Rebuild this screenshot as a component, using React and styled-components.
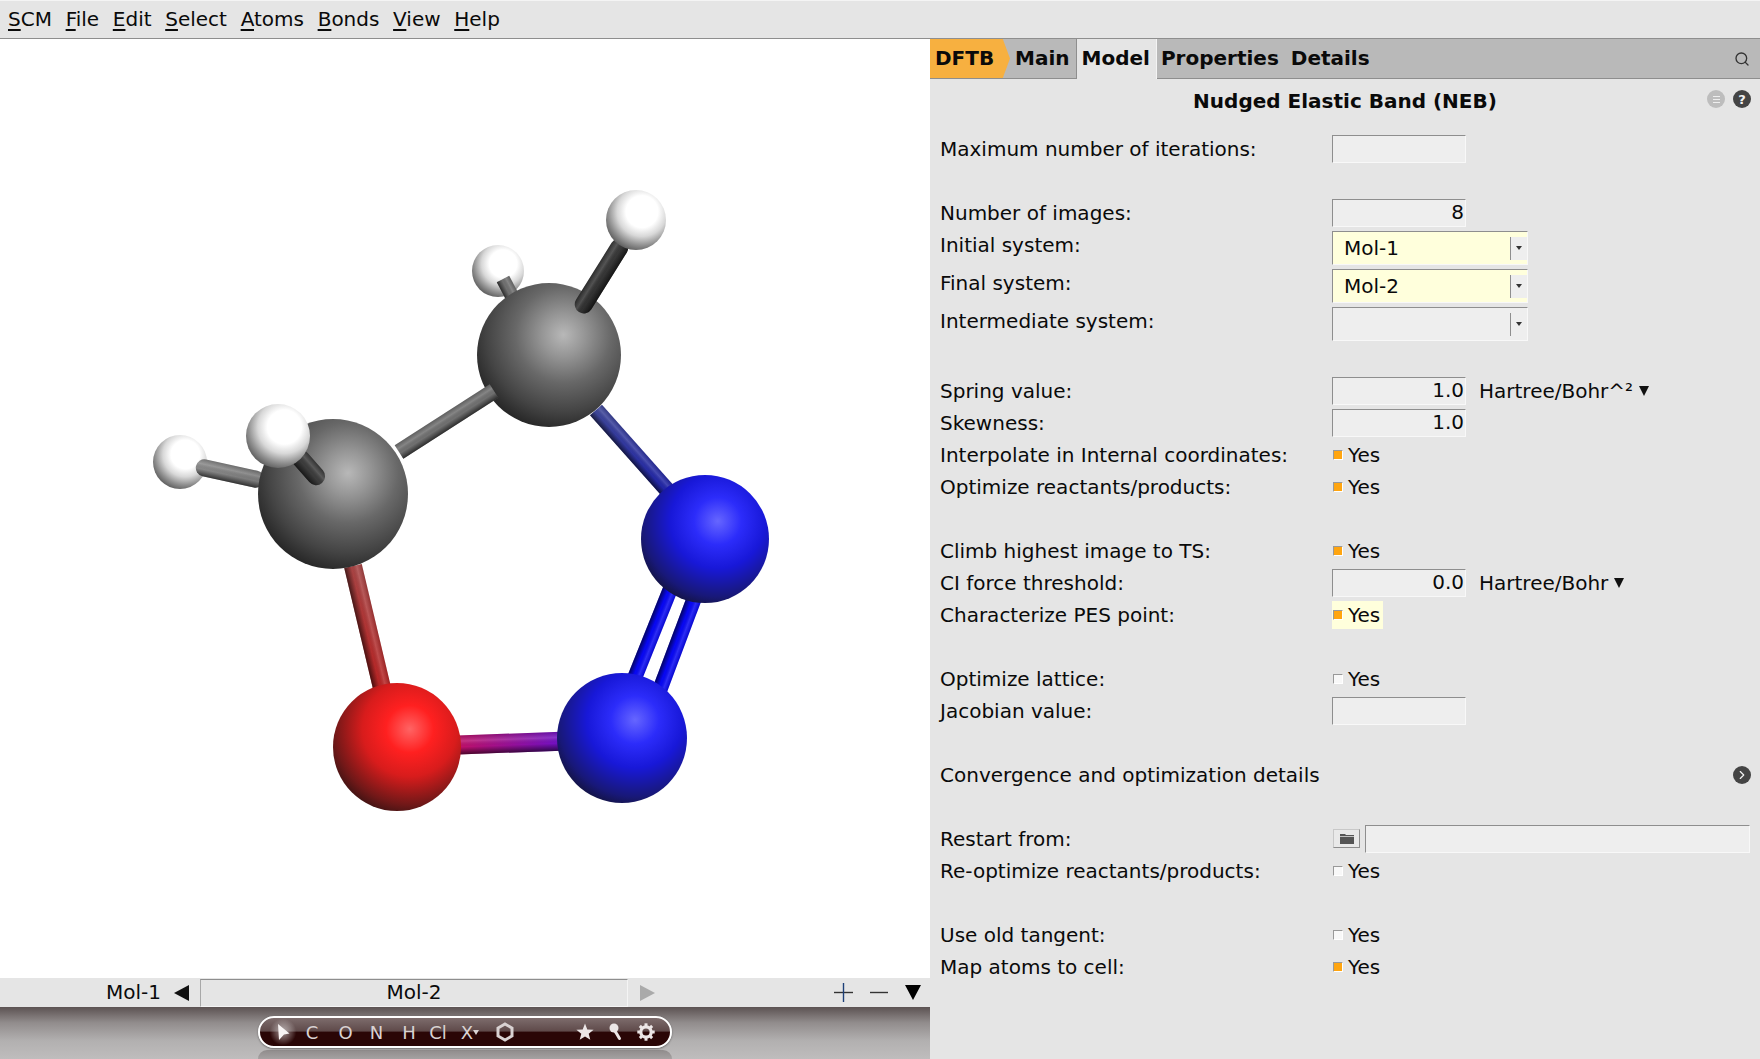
import React from "react";
import styled, { createGlobalStyle } from "styled-components";
import { Search, ChevronRight } from "lucide-react";

const GlobalStyle = createGlobalStyle`
  html, body {
    margin: 0;
    padding: 0;
    background: #e5e5e5;
    overflow: hidden;
  }
  * {
    box-sizing: border-box;
  }
`;

const Page = styled.div`
  width: 1760px;
  height: 1059px;
  display: flex;
  flex-direction: column;
  font-family: "DejaVu Sans", sans-serif;
  font-size: 20px;
  color: #0a0a0a;
  background: #e5e5e5;
`;

const MenuBar = styled.div`
  height: 39px;
  flex: none;
  display: flex;
  align-items: center;
  padding: 0 0 2px 8px;
  gap: 13.7px;
  background: #e5e5e5;
  border-top: 1px solid #f4f4f4;
  border-bottom: 1px solid #8e8e8e;
`;

const MenuItem = styled.span`
  line-height: 24px;
`;

const Mnemonic = styled.span`
  text-decoration: underline;
  text-underline-offset: 3px;
`;

const Body = styled.div`
  flex: 1;
  display: flex;
  min-height: 0;
`;

const LeftColumn = styled.div`
  width: 930px;
  flex: none;
  display: flex;
  flex-direction: column;
`;

const Viewer = styled.div`
  flex: 1;
  min-height: 0;
  background: #fff;
`;

const MoleculeSvg = styled.svg`
  display: block;
  width: 930px;
  height: 939px;
`;

const MoleculeBar = styled.div`
  height: 29px;
  flex: none;
  display: flex;
  align-items: center;
  background: #e5e5e5;
`;

const PrevName = styled.span`
  width: 174px;
  padding: 0 13px 2px 0;
  text-align: right;
`;

const Triangle = styled.span`
  flex: none;
  width: 0;
  height: 0;
  border-style: solid;
  border-color: transparent;
  ${({ $dir, $color, $w, $h }) =>
    $dir === "left"
      ? `border-width: ${$h / 2}px ${$w}px ${$h / 2}px 0; border-right-color: ${$color};`
      : $dir === "right"
      ? `border-width: ${$h / 2}px 0 ${$h / 2}px ${$w}px; border-left-color: ${$color};`
      : `border-width: ${$h}px ${$w / 2}px 0 ${$w / 2}px; border-top-color: ${$color};`}
`;

const CurrentName = styled.div`
  width: 428px;
  height: 28px;
  margin-left: 11px;
  margin-right: 12px;
  padding-bottom: 2px;
  display: flex;
  align-items: center;
  justify-content: center;
  border: 1px solid #f4f4f4;
  border-top-color: #8e8e8e;
  border-left-color: #a8a8a8;
`;

const BarActions = styled.div`
  margin-left: auto;
  padding-right: 9px;
  display: flex;
  align-items: center;
  gap: 17px;
`;

const EditToolbar = styled.div`
  height: 52px;
  flex: none;
  position: relative;
  padding-top: 9px;
  padding-left: 258px;
  background: linear-gradient(#5c5252 0%, #918c8c 30%, #b2b0b0 65%, #bfbdbd 100%);
`;

const Pill = styled.div`
  position: relative;
  width: 414px;
  height: 32px;
  display: flex;
  align-items: center;
  padding: 0 9px 0 10px;
  border: 2px solid #fff;
  border-radius: 16px;
  color: #d9d2d2;
  font-size: 18px;
  background: linear-gradient(#7d6c6c 0%, #5f4a4a 47%, #2a0606 50%, #2a0606 100%);
  box-shadow: 0 1px 2px rgba(0, 0, 0, 0.4);
  z-index: 1;
`;

const PillReflection = styled.div`
  position: absolute;
  left: 258px;
  top: 43px;
  width: 414px;
  height: 9px;
  border-radius: 14px 14px 0 0;
  background: linear-gradient(#8f8b8b, #a5a2a2);
`;

const PillTool = styled.span`
  position: relative;
  flex: none;
  width: ${({ $w }) => $w}px;
  height: 28px;
  display: flex;
  justify-content: center;
  align-items: center;
  ${({ $glow }) =>
    $glow &&
    `background: radial-gradient(circle at 50% 50%, rgba(255,255,255,.55) 0, rgba(255,255,255,.25) 40%, rgba(255,255,255,0) 70%);`}
`;

const PillSpacer = styled.span`
  flex: 1;
`;

const Panel = styled.div`
  flex: 1;
  display: flex;
  flex-direction: column;
  min-width: 0;
`;

const TabBar = styled.div`
  height: 40px;
  flex: none;
  display: flex;
  align-items: stretch;
  background: #b9b9b9;
  border-bottom: 1px solid #8e8e8e;
  font-weight: 700;
`;

const EngineTab = styled.div`
  width: 80px;
  padding: 0 0 2px 5px;
  display: flex;
  align-items: center;
  background: #f7b040;
  clip-path: polygon(0 0, 91% 0, 100% 50%, 91% 100%, 0 100%);
`;

const Tab = styled.div`
  display: flex;
  align-items: center;
  padding-bottom: 2px;
  margin-left: ${({ $ml }) => $ml}px;
  ${({ $active }) =>
    $active &&
    `
    padding: 0 6px 2px 5px;
    margin-bottom: -1px;
    background: #e5e5e5;
    border-left: 1px solid #8e8e8e;
    border-right: 1px solid #f4f4f4;
  `}
`;

const SearchButton = styled.span`
  margin-left: auto;
  padding-right: 10px;
  display: flex;
  align-items: center;
  color: #333;
`;

const TitleRow = styled.div`
  height: 43px;
  flex: none;
  margin-bottom: 13px;
  position: relative;
  display: flex;
  align-items: center;
  justify-content: center;
  font-weight: 700;
`;

const TitleIcons = styled.div`
  position: absolute;
  right: 9px;
  top: 11px;
  display: flex;
  gap: 8px;
`;

const RoundIcon = styled.span`
  width: 18px;
  height: 18px;
  border-radius: 50%;
  display: flex;
  align-items: center;
  justify-content: center;
  flex: none;
  background: ${({ $bg }) => $bg};
  color: #f2f2f2;
  font-size: 13px;
  font-weight: 700;
  line-height: 1;
`;

const RowEndIcon = styled(RoundIcon)`
  margin-top: 5px;
`;

const Form = styled.div`
  display: flex;
  flex-direction: column;
  gap: 4px;
  padding: 0 9px 0 10px;
`;

const Row = styled.div`
  display: flex;
  align-items: flex-start;
  min-height: 28px;
  line-height: 28px;
`;

const RowSpacer = styled.div`
  height: 28px;
`;

const Label = styled.div`
  width: 392px;
  flex: none;
  white-space: nowrap;
`;

const WideLabel = styled.div`
  flex: 1;
  white-space: nowrap;
`;

const Field = styled.div`
  width: 134px;
  height: 28px;
  padding-right: 1px;
  text-align: right;
  line-height: 25px;
  background: #eeeeee;
  border: 1px solid #f8f8f8;
  border-top-color: #8e8e8e;
  border-left-color: #8e8e8e;
`;

const Combo = styled.div`
  width: 196px;
  height: 34px;
  display: flex;
  align-items: center;
  padding-left: 11px;
  line-height: 28px;
  background: ${({ $yellow }) => ($yellow ? "#ffffdc" : "#eeeeee")};
  border: 1px solid #f8f8f8;
  border-top-color: #8e8e8e;
  border-left-color: #8e8e8e;
`;

const ComboValue = styled.span`
  flex: 1;
`;

const ComboArrow = styled.span`
  width: 17px;
  height: 23px;
  display: flex;
  align-items: center;
  justify-content: center;
  background: #eeeeee;
  border-left: 1px solid #8e8e8e;
`;

const Unit = styled.span`
  margin-left: 13px;
  display: flex;
  align-items: center;
  gap: 6px;
`;

const CheckWrap = styled.div`
  height: 28px;
  display: flex;
  align-items: center;
  gap: 5px;
  padding: 0 3px 1px 1px;
  background: ${({ $highlight }) => ($highlight ? "#ffffdc" : "transparent")};
`;

const CheckBox = styled.span`
  width: 10px;
  height: 10px;
  flex: none;
  background: ${({ $on }) => ($on ? "#ffa510" : "#f8f8f8")};
  border: 1px solid #fff;
  border-top-color: #999;
  border-left-color: #999;
`;

const FolderButton = styled.span`
  width: 27px;
  height: 19px;
  margin-top: 4px;
  margin-left: 1px;
  margin-right: 5px;
  flex: none;
  display: flex;
  align-items: center;
  justify-content: center;
  background: #e9e9e9;
  border: 1px solid #8e8e8e;
  border-top-color: #c8c8c8;
  border-left-color: #c8c8c8;
`;

const PathField = styled(Field)`
  width: auto;
  flex: 1;
  margin-right: 1px;
`;

const sphereStops = {
  carbon: [
    [0, "#b8b8b8"],
    [0.2, "#969696"],
    [0.45, "#686868"],
    [0.72, "#444444"],
    [1, "#181818"],
  ],
  hydrogen: [
    [0, "#ffffff"],
    [0.36, "#ffffff"],
    [0.56, "#d8d8d8"],
    [0.76, "#909090"],
    [1, "#404040"],
  ],
  nitrogen: [
    [0, "#6666ff"],
    [0.25, "#2c2cfa"],
    [0.5, "#1818d8"],
    [0.8, "#181878"],
    [1, "#101020"],
  ],
  oxygen: [
    [0, "#ff6464"],
    [0.25, "#ff2020"],
    [0.5, "#d81c1c"],
    [0.8, "#701818"],
    [1, "#201010"],
  ],
};

function Bond({ x1, y1, x2, y2, w, a, b = a, round, id }) {
  const length = Math.hypot(x2 - x1, y2 - y1);
  const theta = Math.atan2(y2 - y1, x2 - x1);
  // the light comes from the upper right, pick the side of the tube that faces it
  const litDown = -Math.sin(theta) * 0.5 + Math.cos(theta) * -0.8 > 0;
  const rx = round ? w / 2 : 0;
  return (
    <g transform={`translate(${x1} ${y1}) rotate(${(theta * 180) / Math.PI})`}>
      <linearGradient id={`bond-${id}`}>
        <stop offset="0" stopColor={a} />
        <stop offset="1" stopColor={b} />
      </linearGradient>
      <rect x={0} y={-w / 2} width={length} height={w} rx={rx} fill={`url(#bond-${id})`} />
      <rect
        x={0}
        y={-w / 2}
        width={length}
        height={w}
        rx={rx}
        fill={litDown ? "url(#shade-down)" : "url(#shade-up)"}
      />
    </g>
  );
}

const Atom = ({ cx, cy, r, kind }) => <circle cx={cx} cy={cy} r={r} fill={`url(#${kind})`} />;

const shadeStops = [
  [0, 0, 0.15],
  [0.3, 255, 0.15],
  [0.6, 0, 0],
  [1, 0, 0.6],
];

function Molecule() {
  return (
    <MoleculeSvg viewBox="0 39 930 939">
      <defs>
        <linearGradient id="shade-up" x1="0" y1="0" x2="0" y2="1">
          {shadeStops.map(([o, c, op]) => (
            <stop key={o} offset={o} stopColor={`rgb(${c},${c},${c})`} stopOpacity={op} />
          ))}
        </linearGradient>
        <linearGradient id="shade-down" x1="0" y1="1" x2="0" y2="0">
          {shadeStops.map(([o, c, op]) => (
            <stop key={o} offset={o} stopColor={`rgb(${c},${c},${c})`} stopOpacity={op} />
          ))}
        </linearGradient>
        {Object.entries(sphereStops).map(([name, stops]) => (
          <radialGradient key={name} id={name} cx="0.6" cy="0.36" r="0.74">
            {stops.map(([offset, color]) => (
              <stop key={offset} offset={offset} stopColor={color} />
            ))}
          </radialGradient>
        ))}
      </defs>

      <Atom cx={498} cy={271} r={26} kind="hydrogen" />
      <Bond id="hb" x1={503} y1={279} x2={514} y2={300} w={14} a="#707070" />
      <Atom cx={180} cy={462} r={27} kind="hydrogen" />
      <Bond id="hl" x1={196} y1={466} x2={264} y2={481} w={17} a="#8a8a8a" b="#787878" round />

      <Bond id="cn" x1={596} y1={410} x2={668} y2={491} w={16} a="#3e4698" b="#2024a8" />
      <Atom cx={549} cy={355} r={72} kind="carbon" />
      <Bond id="cc" x1={399} y1={452} x2={494} y2={391} w={16} a="#707070" />
      <Bond id="ht" x1={624} y1={240} x2={579} y2={312} w={18} a="#3a3a3a" b="#303030" round />
      <Atom cx={636} cy={220} r={30} kind="hydrogen" />

      <Bond id="co" x1={353} y1={566} x2={382} y2={688} w={18} a="#a84444" b="#b82424" />
      <Atom cx={333} cy={494} r={75} kind="carbon" />
      <Bond id="hf" x1={295} y1={452} x2={322} y2={483} w={18} a="#3c3c3c" round />
      <Atom cx={278} cy={436} r={32} kind="hydrogen" />

      <Bond id="nn1" x1={672} y1={585} x2={635} y2={677} w={15} a="#0808f4" />
      <Bond id="nn2" x1={694} y1={599} x2={659} y2={692} w={15} a="#0808f4" />
      <Bond id="on" x1={458} y1={745} x2={568} y2={741} w={19} a="#c01068" b="#6a10cc" />
      <Atom cx={705} cy={539} r={64} kind="nitrogen" />
      <Atom cx={622} cy={738} r={65} kind="nitrogen" />
      <Atom cx={397} cy={747} r={64} kind="oxygen" />
    </MoleculeSvg>
  );
}

const menus = [
  ["S", "CM"],
  ["F", "ile"],
  ["E", "dit"],
  ["S", "elect"],
  ["A", "toms"],
  ["B", "onds"],
  ["V", "iew"],
  ["H", "elp"],
];

function Check({ on, highlight }) {
  return (
    <CheckWrap $highlight={highlight}>
      <CheckBox $on={on} />
      Yes
    </CheckWrap>
  );
}

function ComboBox({ value, yellow }) {
  return (
    <Combo $yellow={yellow}>
      <ComboValue>{value}</ComboValue>
      <ComboArrow>
        <Triangle $dir="down" $color="#333" $w={7} $h={4} />
      </ComboArrow>
    </Combo>
  );
}

function CheckRow({ label, on, highlight }) {
  return (
    <Row>
      <Label>{label}</Label>
      <Check on={on} highlight={highlight} />
    </Row>
  );
}

function FieldRow({ label, value, unit }) {
  return (
    <Row>
      <Label>{label}</Label>
      <Field>{value}</Field>
      {unit && (
        <Unit>
          {unit}
          <Triangle $dir="down" $color="#111" $w={10} $h={10} />
        </Unit>
      )}
    </Row>
  );
}

function ComboRow({ label, value, yellow }) {
  return (
    <Row>
      <Label>{label}</Label>
      <ComboBox value={value} yellow={yellow} />
    </Row>
  );
}

const CursorIcon = () => (
  <svg width="14" height="18" viewBox="0 0 14 18">
    <path d="M2 1 L13.5 10.5 L8 11.5 L3 17 Z" fill="#f8f4f4" />
  </svg>
);

const RingIcon = () => (
  <svg width="18" height="20" viewBox="0 0 18 20">
    <path d="M9 2 L16 6 L16 14 L9 18 L2 14 L2 6 Z" fill="none" stroke="#d9d2d2" strokeWidth="3" />
  </svg>
);

const StarIcon = () => (
  <svg width="18" height="18" viewBox="0 0 18 18">
    <path d="M9 0.5 L11.3 6.4 L17.6 6.7 L12.7 10.7 L14.3 16.8 L9 13.4 L3.7 16.8 L5.3 10.7 L0.4 6.7 L6.7 6.4 Z" fill="#ece6e6" />
  </svg>
);

const PinIcon = () => (
  <svg width="14" height="18" viewBox="0 0 14 18">
    <circle cx="5" cy="5" r="4.5" fill="#ece6e6" />
    <path d="M6 8 L10.5 15.5" stroke="#ece6e6" strokeWidth="3" strokeLinecap="round" />
  </svg>
);

const GearIcon = () => (
  <svg width="18" height="18" viewBox="0 0 18 18">
    <circle cx="9" cy="9" r="5.2" fill="none" stroke="#ece6e6" strokeWidth="3.2" />
    {[0, 45, 90, 135, 180, 225, 270, 315].map((deg) => (
      <rect key={deg} x="7.5" y="0.3" width="3" height="3" fill="#ece6e6" transform={`rotate(${deg} 9 9)`} />
    ))}
  </svg>
);

const FolderIcon = () => (
  <svg width="16" height="13" viewBox="0 0 16 13">
    <path d="M1 2 H6 L7 3 H15 V12 H1 Z" fill="#555" />
    <path d="M1 4.5 H15" stroke="#ddd" strokeWidth="0.8" />
  </svg>
);

const MenuLinesIcon = () => (
  <svg width="9" height="9" viewBox="0 0 9 9">
    <path d="M1 1.5 H8 M1 4.5 H8 M1 7.5 H8" stroke="#eee" strokeWidth="1" />
  </svg>
);

export default function App() {
  return (
    <Page>
      <GlobalStyle />
      <MenuBar>
        {menus.map(([key, rest], i) => (
          <MenuItem key={i}>
            <Mnemonic>{key}</Mnemonic>
            {rest}
          </MenuItem>
        ))}
      </MenuBar>
      <Body>
        <LeftColumn>
          <Viewer>
            <Molecule />
          </Viewer>
          <MoleculeBar>
            <PrevName>Mol-1</PrevName>
            <Triangle $dir="left" $color="#111" $w={15} $h={16} />
            <CurrentName>Mol-2</CurrentName>
            <Triangle $dir="right" $color="#aaa" $w={15} $h={16} />
            <BarActions>
              <svg width="19" height="19" viewBox="0 0 19 19">
                <path d="M0 9.5 H19" stroke="#333" strokeWidth="1.4" />
                <path d="M9.5 0 V19" stroke="#1c3f78" strokeWidth="1.4" />
              </svg>
              <svg width="18" height="19" viewBox="0 0 18 19">
                <path d="M0 9.5 H18" stroke="#333" strokeWidth="1.4" />
              </svg>
              <Triangle $dir="down" $color="#000" $w={16} $h={15} />
            </BarActions>
          </MoleculeBar>
          <EditToolbar>
            <PillReflection />
            <Pill>
              <PillTool $w={26} $glow>
                <CursorIcon />
              </PillTool>
              <PillTool $w={32}>C</PillTool>
              <PillTool $w={35}>O</PillTool>
              <PillTool $w={27}>N</PillTool>
              <PillTool $w={38}>H</PillTool>
              <PillTool $w={20}>Cl</PillTool>
              <PillTool $w={44}>
                X<Triangle $dir="down" $color="#d9d2d2" $w={7} $h={5} />
              </PillTool>
              <PillTool $w={26}>
                <RingIcon />
              </PillTool>
              <PillSpacer />
              <PillTool $w={32}>
                <StarIcon />
              </PillTool>
              <PillTool $w={30}>
                <PinIcon />
              </PillTool>
              <PillTool $w={30}>
                <GearIcon />
              </PillTool>
            </Pill>
          </EditToolbar>
        </LeftColumn>
        <Panel>
          <TabBar>
            <EngineTab>DFTB</EngineTab>
            <Tab $ml={5}>Main</Tab>
            <Tab $ml={6} $active>Model</Tab>
            <Tab $ml={4}>Properties</Tab>
            <Tab $ml={12}>Details</Tab>
            <SearchButton>
              <Search size={16} strokeWidth={2} />
            </SearchButton>
          </TabBar>
          <TitleRow>
            Nudged Elastic Band (NEB)
            <TitleIcons>
              <RoundIcon $bg="#bdbdbd">
                <MenuLinesIcon />
              </RoundIcon>
              <RoundIcon $bg="#444">?</RoundIcon>
            </TitleIcons>
          </TitleRow>
          <Form>
            <FieldRow label="Maximum number of iterations:" />
            <RowSpacer />
            <FieldRow label="Number of images:" value="8" />
            <ComboRow label="Initial system:" value="Mol-1" yellow />
            <ComboRow label="Final system:" value="Mol-2" yellow />
            <ComboRow label="Intermediate system:" />
            <RowSpacer />
            <FieldRow label="Spring value:" value="1.0" unit="Hartree/Bohr^²" />
            <FieldRow label="Skewness:" value="1.0" />
            <CheckRow label="Interpolate in Internal coordinates:" on />
            <CheckRow label="Optimize reactants/products:" on />
            <RowSpacer />
            <CheckRow label="Climb highest image to TS:" on />
            <FieldRow label="CI force threshold:" value="0.0" unit="Hartree/Bohr" />
            <CheckRow label="Characterize PES point:" on highlight />
            <RowSpacer />
            <CheckRow label="Optimize lattice:" />
            <FieldRow label="Jacobian value:" />
            <RowSpacer />
            <Row>
              <WideLabel>Convergence and optimization details</WideLabel>
              <RowEndIcon $bg="#444">
                <ChevronRight size={14} strokeWidth={2} />
              </RowEndIcon>
            </Row>
            <RowSpacer />
            <Row>
              <Label>Restart from:</Label>
              <FolderButton>
                <FolderIcon />
              </FolderButton>
              <PathField />
            </Row>
            <CheckRow label="Re-optimize reactants/products:" />
            <RowSpacer />
            <CheckRow label="Use old tangent:" />
            <CheckRow label="Map atoms to cell:" on />
          </Form>
        </Panel>
      </Body>
    </Page>
  );
}
